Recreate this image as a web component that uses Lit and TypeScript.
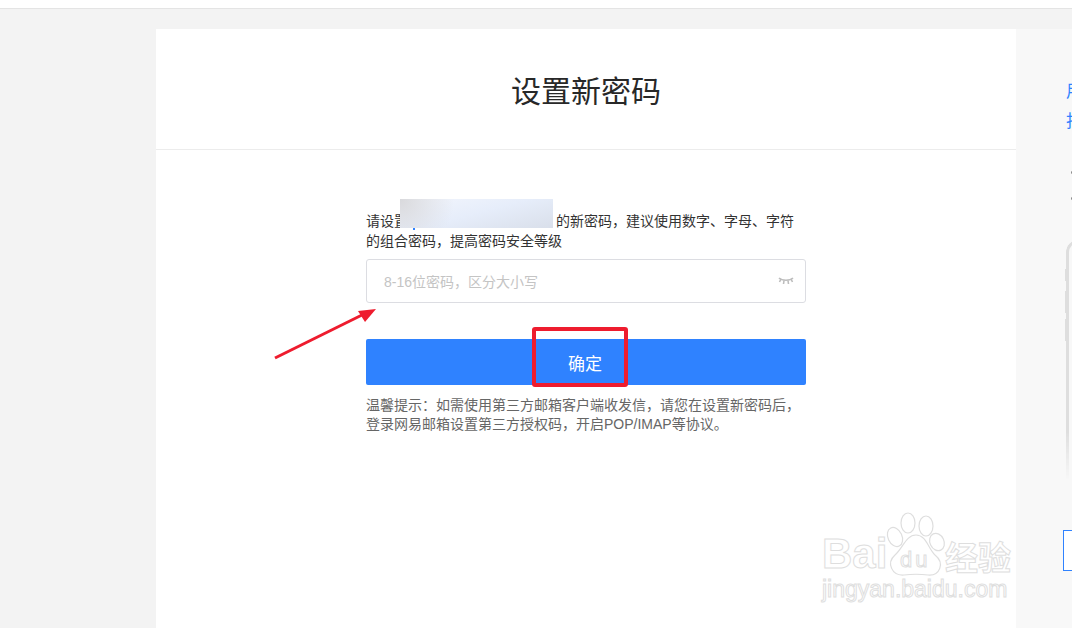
import { LitElement, html, css } from "lit";
import { customElement } from "lit/decorators.js";

@customElement("app-root")
export class AppRoot extends LitElement {
  static styles = css`
    :host { display: block; width: 1072px; height: 628px; overflow: hidden; position: relative; background: #f3f3f3; font-family: "Liberation Sans", "Noto Sans CJK SC", sans-serif; }
    .top { height: 8px; background: #fff; border-bottom: 1px solid #e4e4e4; }
    .main { display: flex; height: 619px; padding: 20px 0 0 156px; box-sizing: border-box; }
    .card { width: 860px; flex: none; background: #fff; }
    .head { height: 120px; border-bottom: 1px solid #ececec; display: flex; align-items: center; justify-content: center; font-size: 30px; color: #282828; }
    .form { width: 440px; margin: 0 auto; padding-top: 61px; }
    .intro { font-size: 14px; line-height: 20px; color: #333; height: 40px; position: relative; margin-bottom: 8px; }
    .gap { display: inline-block; width: 148px; }
    .blur { position: absolute; left: 34px; top: -12px; width: 153px; height: 29px; background: radial-gradient(circle at 0 0, #d9d9dc 0%, rgba(217,217,220,0) 35%), linear-gradient(165deg, #f3f6fd 0%, #e6edfa 50%, #d9dfea 100%); }
    .blur::after { content: ""; position: absolute; left: 13px; top: 29px; width: 2px; height: 2px; background: #2f82ff; }
    .input { height: 42px; border: 1px solid #dcdde2; border-radius: 3px; display: flex; align-items: center; justify-content: space-between; padding: 0 11px 0 17px; font-size: 14px; color: #c4c4c4; }
    .btn { height: 46px; margin-top: 36px; background: #2f82ff; border-radius: 2px; color: #fff; font-size: 17px; display: flex; align-items: center; justify-content: center; padding-right: 2px; box-sizing: border-box; }
    .tip { margin-top: 11px; font-size: 14px; line-height: 19px; color: #666; white-space: nowrap; }
    .side { flex: 1; background: #f8f8f8; padding: 48px 0 0 50px; overflow: hidden; position: relative; }
    .links { color: #2f82ff; font-size: 17px; line-height: 30px; white-space: nowrap; }
    .box { position: absolute; left: 47px; top: 501px; width: 60px; height: 39px; border: 1px solid #2f82ff; background: #fff; }
    .dot { position: absolute; left: 55px; width: 3px; height: 3px; background: #888; border-radius: 50%; }
    .d1 { top: 142px; } .d2 { top: 168px; }
    .phone { position: absolute; left: 50px; top: 211px; width: 60px; height: 240px; border: 3px solid #dedede; border-bottom: none; border-radius: 12px 12px 0 0; box-sizing: border-box; -webkit-mask-image: linear-gradient(to bottom, #000 80%, transparent 100%); mask-image: linear-gradient(to bottom, #000 80%, transparent 100%); }
    .key { position: absolute; left: 49px; width: 2px; background: #dedede; }
    .k1 { top: 240px; height: 12px; } .k2 { top: 262px; height: 22px; } .k3 { top: 290px; height: 22px; }
    .overlay { position: absolute; left: 0; top: 0; pointer-events: none; }
    .wm { position: absolute; left: 820px; top: 510px; width: 196px; height: 100px; }
    .wm span { position: absolute; color: #fff; -webkit-text-stroke: 1px #dedede; font-family: "Liberation Sans", sans-serif; white-space: nowrap; line-height: 1; }
    .bai { left: 2px; top: 23px; font-size: 42px; font-weight: 700; }
    .du { left: 80px; top: 39px; font-size: 22px; letter-spacing: 3px; }
    .wm .jy { left: 125px; top: 30px; font-size: 33px; font-weight: 700; font-family: "Noto Sans CJK SC", sans-serif; }
    .url { left: 2px; top: 68px; font-size: 23px; }
  `;

  render() {
    return html`
      <div class="top"></div>
      <div class="main">
        <div class="card">
          <div class="head"><span>设置新密码</span></div>
          <div class="form">
            <div class="intro">
              请设置<span class="gap"></span>的新密码，建议使用数字、字母、字符的组合密码，提高密码安全等级
              <div class="blur"></div>
            </div>
            <div class="input">
              <span>8-16位密码，区分大小写</span>
              <svg width="16" height="10" viewBox="0 0 16 10" fill="none" stroke="#bdbdbd" stroke-width="1.6">
                <path d="M1 2 C4 5 12 5 15 2"/><path d="M3 3 L1.5 6M6 4.5 L5.5 8M10 4.5 L10.5 8M13 3 L14.5 6"/>
              </svg>
            </div>
            <div class="btn"><span>确定</span></div>
            <div class="tip">温馨提示：如需使用第三方邮箱客户端收发信，请您在设置新密码后，<br>登录网易邮箱设置第三方授权码，开启POP/IMAP等协议。</div>
          </div>
        </div>
        <div class="side">
          <div class="links">用户<br>找回</div>
          <div class="dot d1"></div><div class="dot d2"></div>
          <div class="phone"></div>
          <div class="key k1"></div><div class="key k2"></div><div class="key k3"></div>
          <div class="box"></div>
        </div>
      </div>
      <svg class="overlay" width="1072" height="628" fill="none">
        <rect x="534" y="329" width="92" height="56" stroke="#ee1c2e" stroke-width="4" rx="1"/>
        <path d="M275 358 L364 314" stroke="#ee1c2e" stroke-width="3"/>
        <path d="M376 309 L358 311 L365 322 Z" fill="#ee1c2e"/>
      </svg>
      <div class="wm">
        <svg style="position:absolute;left:0;top:0" width="196" height="100" fill="#fff" stroke="#dedede" stroke-width="1.2">
          <ellipse cx="75" cy="27" rx="7" ry="10" transform="rotate(-25 75 27)"/>
          <ellipse cx="88" cy="13" rx="7" ry="10"/>
          <ellipse cx="106" cy="16" rx="7" ry="10"/>
          <ellipse cx="117" cy="32" rx="7" ry="9" transform="rotate(-25 117 32)"/>
          <path d="M96 25 C86 25 83 38 75 45 C66 53 72 66 84 65 C92 64 100 64 108 65 C120 66 125 53 115 45 C108 38 106 25 96 25 Z"/>
        </svg>
        <span class="bai">Bai</span>
        <span class="du">du</span>
        <span class="jy">经验</span>
        <span class="url">jingyan.baidu.com</span>
      </div>
    `;
  }
}
